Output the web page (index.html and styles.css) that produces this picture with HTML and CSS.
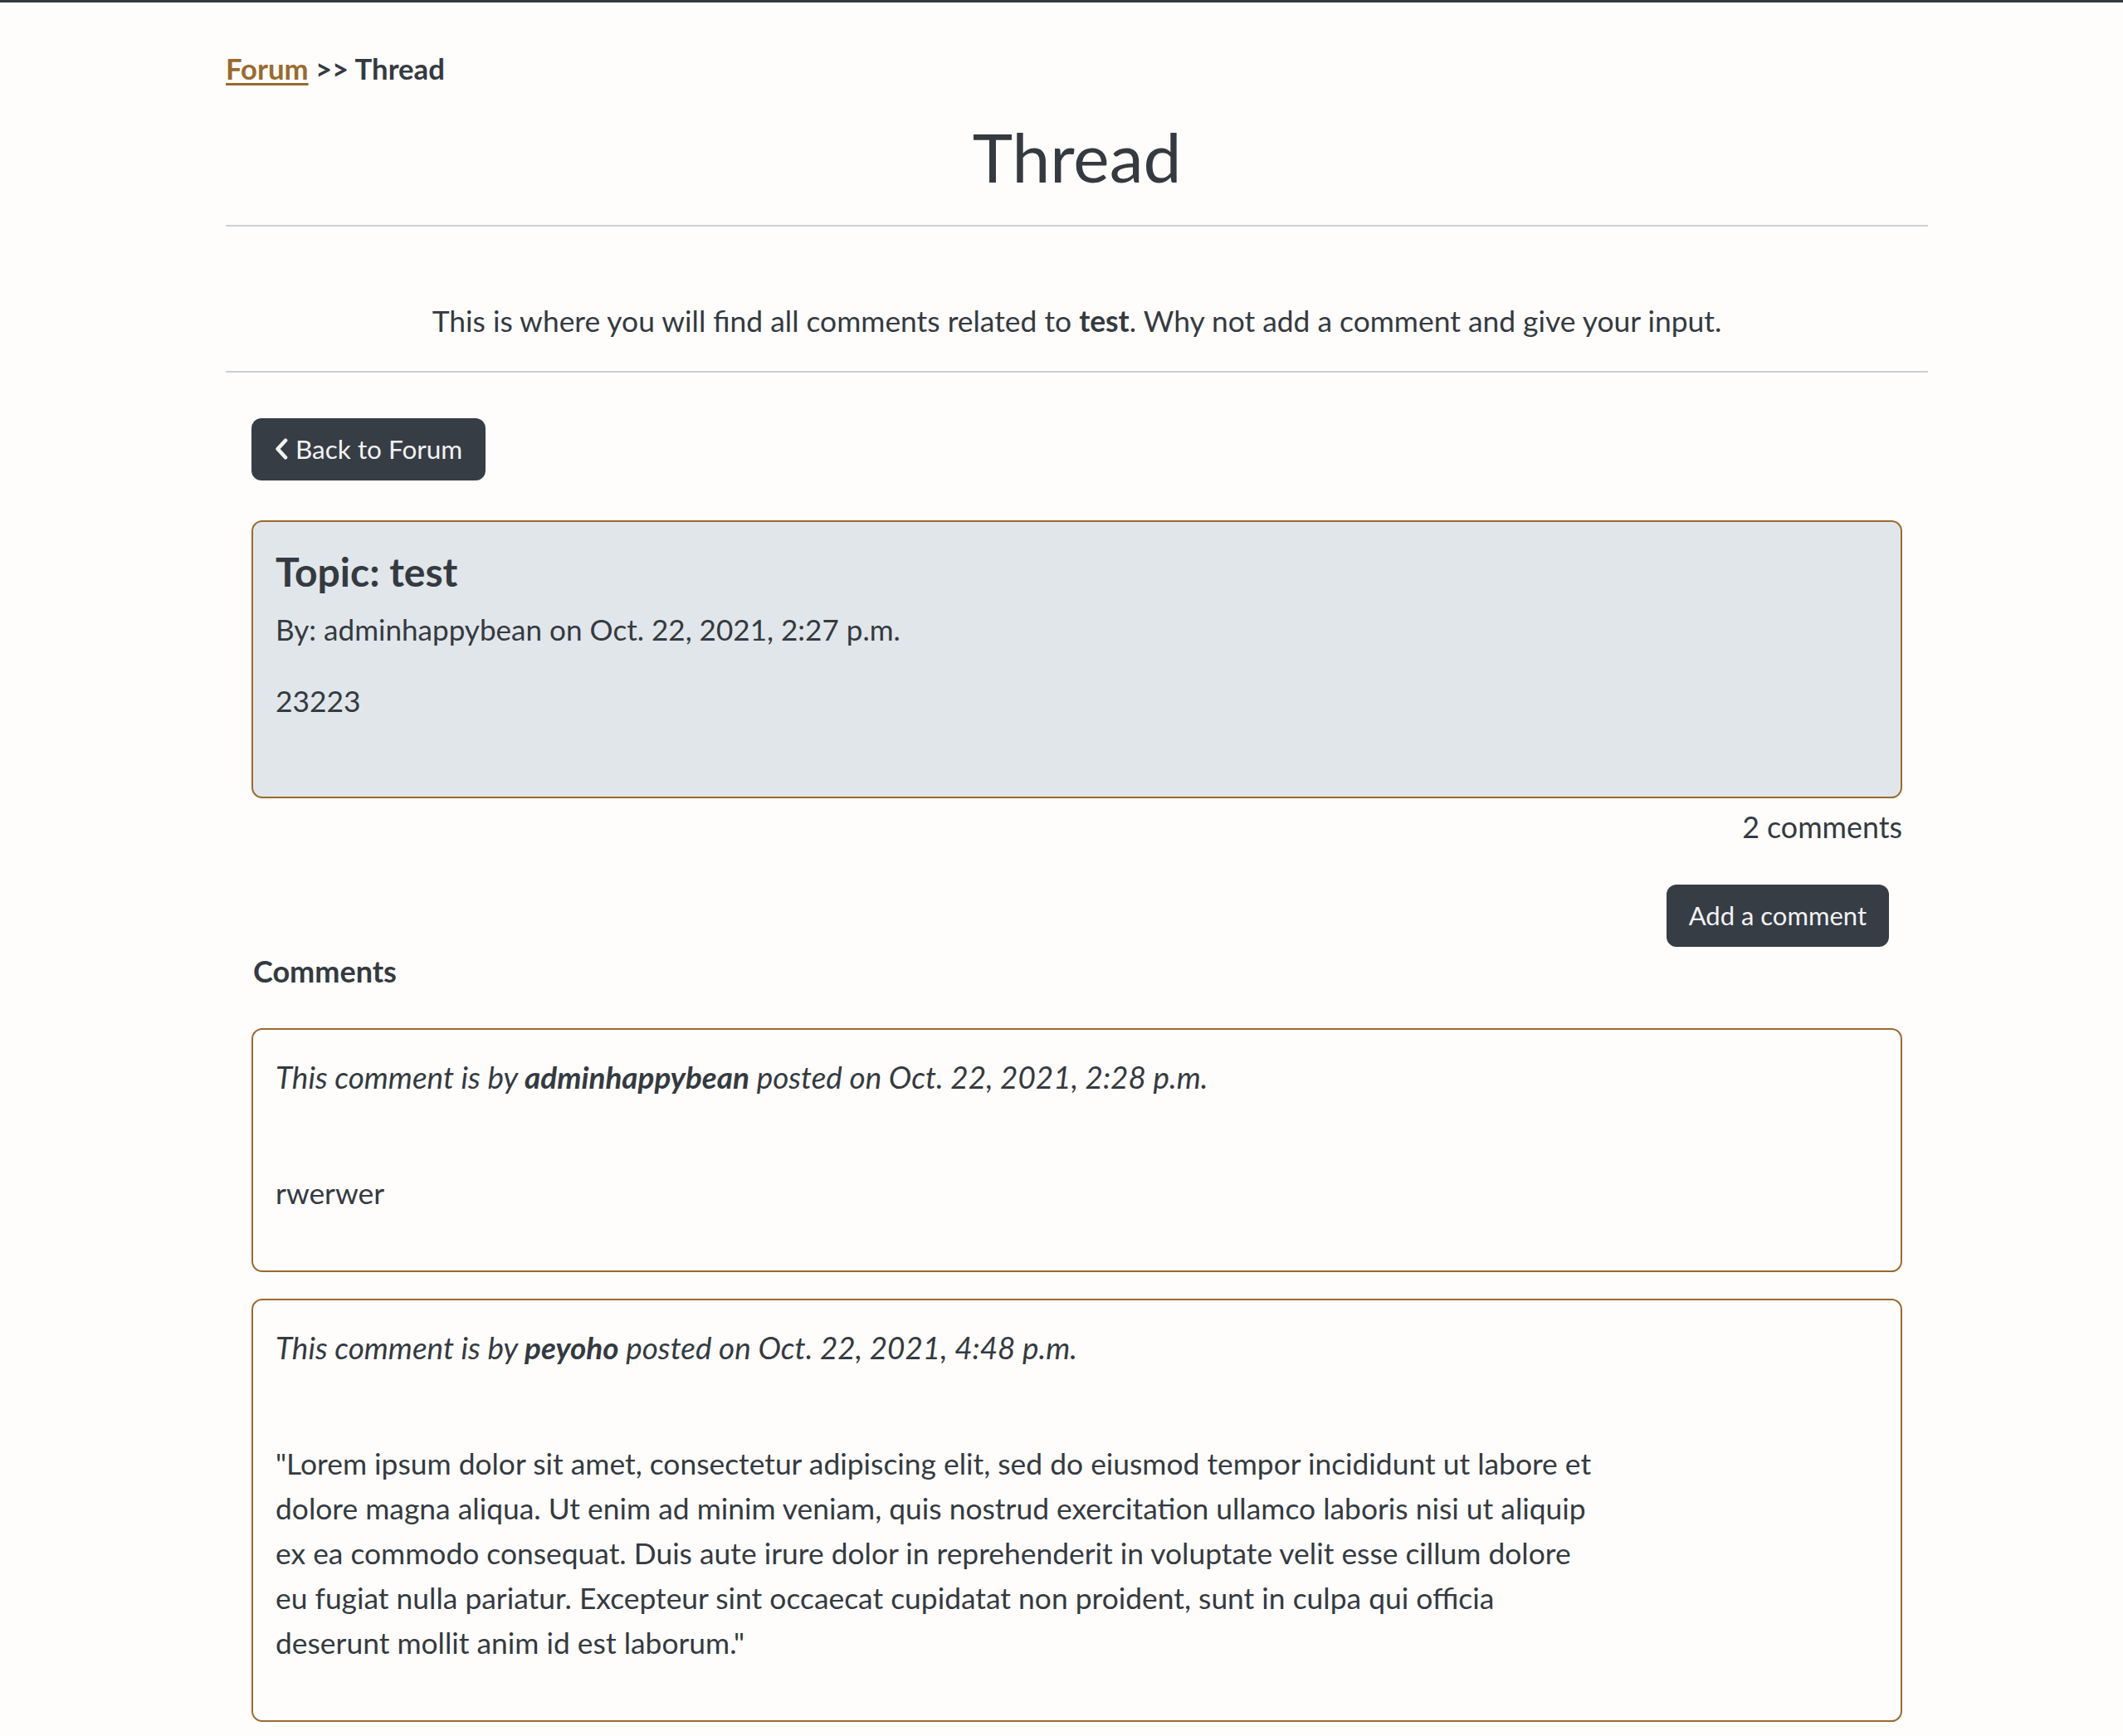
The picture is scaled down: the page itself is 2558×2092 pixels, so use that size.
FILE: index.html
```html
<!DOCTYPE html>
<html lang="en">
<head>
<meta charset="utf-8">
<title>Thread</title>
<link rel="stylesheet" href="styles.css">
</head>
<body>
<div class="topbar"></div>
<main class="page">
  <nav class="crumbs"><a href="#" class="crumb-link">Forum</a> &gt;&gt; Thread</nav>
  <h1 class="title">Thread</h1>
  <hr class="rule">
  <p class="intro">This is where you will find all comments related to <strong>test</strong>. Why not add a comment and give your input.</p>
  <hr class="rule">
  <section class="content">
    <a href="#" class="btn btn-back"><svg class="chev" viewBox="0 0 16 26" width="16" height="26"><polyline points="13,2.8 3.6,13 13,23.2" fill="none" stroke="currentColor" stroke-width="4.6" stroke-linecap="round" stroke-linejoin="round"/></svg>Back to Forum</a>
    <article class="topic">
      <h2 class="topic-title">Topic: test</h2>
      <p class="topic-by">By: adminhappybean on Oct. 22, 2021, 2:27 p.m.</p>
      <p class="topic-body">23223</p>
    </article>
    <p class="count">2 comments</p>
    <div class="add-row"><a href="#" class="btn btn-add">Add a comment</a></div>
    <h3 class="comments-head">Comments</h3>
    <div class="comment">
      <p class="meta">This comment is by <strong>adminhappybean</strong> posted on Oct. 22, 2021, 2:28 p.m.</p>
      <p class="comment-text">rwerwer</p>
    </div>
    <div class="comment">
      <p class="meta">This comment is by <strong>peyoho</strong> posted on Oct. 22, 2021, 4:48 p.m.</p>
      <p class="comment-text">"Lorem ipsum dolor sit amet, consectetur adipiscing elit, sed do eiusmod tempor incididunt ut labore et dolore magna aliqua. Ut enim ad minim veniam, quis nostrud exercitation ullamco laboris nisi ut aliquip ex ea commodo consequat. Duis aute irure dolor in reprehenderit in voluptate velit esse cillum dolore eu fugiat nulla pariatur. Excepteur sint occaecat cupidatat non proident, sunt in culpa qui officia deserunt mollit anim id est laborum."</p>
    </div>
  </section>
</main>
</body>
</html>
```
FILE: styles.css
```css
html, body {
  margin: 0;
  padding: 0;
}
body {
  background: #fefdfc;
  color: #343a40;
  font-family: Lato, "Open Sans", "Liberation Sans", sans-serif;
  font-size: 35.4px;
  line-height: 54px;
}
.topbar {
  height: 3px;
  background: #343a40;
}
.page {
  width: 2051px;
  margin: 0 0 0 272px;
  padding-bottom: 40px;
}
.crumbs {
  margin-top: 53px;
  font-size: 34.7px;
  font-weight: 700;
  line-height: 54px;
}
.crumb-link {
  color: #9a6a2f;
  text-decoration: underline;
  text-underline-offset: 4px;
  text-decoration-thickness: 3px;
}
.title {
  margin: 29px 0 0;
  font-size: 82px;
  font-weight: 400;
  line-height: 98.5px;
  text-align: center;
}
.rule {
  margin: 33px 0 0;
  border: 0;
  border-top: 2px solid #cdcfd2;
  height: 0;
}
.intro {
  margin: 87px 0 31px;
  text-align: center;
}
.content {
  padding: 55px 31px 0;
}
.btn {
  display: inline-flex;
  align-items: center;
  background: #363d45;
  color: #f2f2f2;
  text-decoration: none;
  font-size: 31.5px;
  line-height: 53px;
  padding: 11px 28px;
  border-radius: 12px;
}
.btn-add {
  font-size: 31px;
  padding: 11px 27px;
}
.chev {
  margin-right: 9px;
  margin-left: 0;
}
.topic {
  margin-top: 48px;
  border: 2px solid #9a6a2f;
  border-radius: 13px;
  background: #e1e6ea;
  padding: 30px 27px 88px;
}
.topic-title {
  margin: 0;
  font-size: 48px;
  line-height: 59px;
  font-weight: 700;
}
.topic-by {
  margin: 13px 0 0;
  font-size: 35.1px;
}
.topic-body {
  margin: 33px 0 0;
}
.count {
  margin: 8px 0 0;
  text-align: right;
  font-size: 35.8px;
}
.add-row {
  display: flex;
  justify-content: flex-end;
  margin-top: 42px;
  padding-right: 16px;
}
.comments-head {
  margin: 2px 0 0 2px;
  font-size: 36px;
  line-height: 54px;
  font-weight: 700;
}
.comment {
  margin-top: 42px;
  border: 2px solid #9a6a2f;
  border-radius: 13px;
  background: #fefdfc;
  padding: 30px 28px 66px 27px;
}
.comment + .comment {
  margin-top: 32px;
}
.meta {
  margin: 0;
  font-style: italic;
  font-size: 36.9px;
}
.comment-text {
  margin: 86px 0 0;
  max-width: 1595px;
}
```
